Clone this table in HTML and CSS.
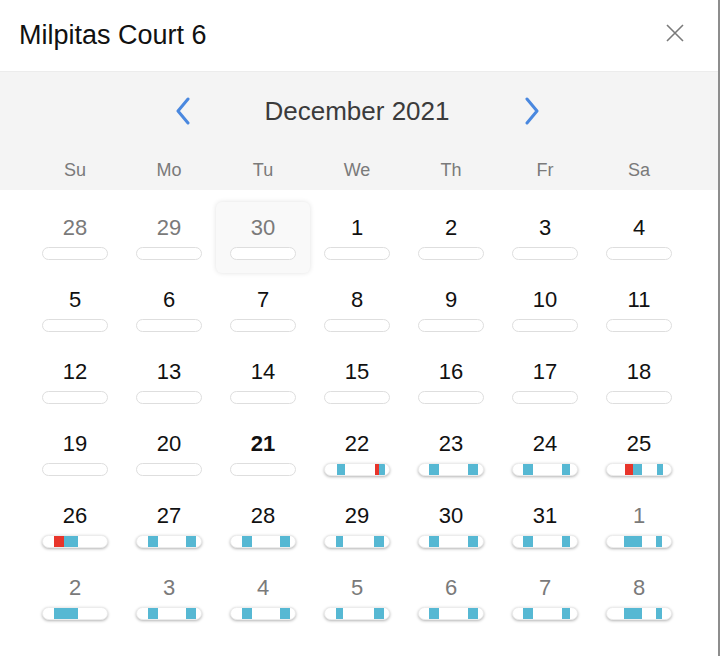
FILE: index.html
```html
<!DOCTYPE html>
<html>
<head>
<meta charset="utf-8">
<link rel="stylesheet" href="styles.css">
</head>
<body>
<div class="modal">
  <header class="head">
    <h1 class="title">Milpitas Court 6</h1>
    <button class="close" aria-label="Close">
      <svg width="20" height="20" viewBox="0 0 20 20"><path d="M2 2L18 18M18 2L2 18" stroke="#7a7a7a" stroke-width="1.6" fill="none"/></svg>
    </button>
  </header>
  <section class="band">
    <div class="nav">
      <svg class="chev" width="16" height="28" viewBox="0 0 16 28"><path d="M13 2L3 14L13 26" stroke="#4a88df" stroke-width="3" fill="none" stroke-linecap="round" stroke-linejoin="round"/></svg>
      <div class="month">December 2021</div>
      <svg class="chev" width="16" height="28" viewBox="0 0 16 28"><path d="M3 2L13 14L3 26" stroke="#4a88df" stroke-width="3" fill="none" stroke-linecap="round" stroke-linejoin="round"/></svg>
    </div>
    <div class="weekdays">
      <div>Su</div><div>Mo</div><div>Tu</div><div>We</div><div>Th</div><div>Fr</div><div>Sa</div>
    </div>
  </section>
  <section class="grid">
    <div class="cell other"><span class="num">28</span><span class="bar"></span></div>
    <div class="cell other"><span class="num">29</span><span class="bar"></span></div>
    <div class="cell other hover"><span class="num">30</span><span class="bar"></span></div>
    <div class="cell"><span class="num">1</span><span class="bar"></span></div>
    <div class="cell"><span class="num">2</span><span class="bar"></span></div>
    <div class="cell"><span class="num">3</span><span class="bar"></span></div>
    <div class="cell"><span class="num">4</span><span class="bar"></span></div>

    <div class="cell"><span class="num">5</span><span class="bar"></span></div>
    <div class="cell"><span class="num">6</span><span class="bar"></span></div>
    <div class="cell"><span class="num">7</span><span class="bar"></span></div>
    <div class="cell"><span class="num">8</span><span class="bar"></span></div>
    <div class="cell"><span class="num">9</span><span class="bar"></span></div>
    <div class="cell"><span class="num">10</span><span class="bar"></span></div>
    <div class="cell"><span class="num">11</span><span class="bar"></span></div>

    <div class="cell"><span class="num">12</span><span class="bar"></span></div>
    <div class="cell"><span class="num">13</span><span class="bar"></span></div>
    <div class="cell"><span class="num">14</span><span class="bar"></span></div>
    <div class="cell"><span class="num">15</span><span class="bar"></span></div>
    <div class="cell"><span class="num">16</span><span class="bar"></span></div>
    <div class="cell"><span class="num">17</span><span class="bar"></span></div>
    <div class="cell"><span class="num">18</span><span class="bar"></span></div>

    <div class="cell"><span class="num">19</span><span class="bar"></span></div>
    <div class="cell"><span class="num">20</span><span class="bar"></span></div>
    <div class="cell today"><span class="num">21</span><span class="bar"></span></div>
    <div class="cell"><span class="num">22</span><span class="bar full"><i class="seg c" style="left:12px;width:8px"></i><i class="seg r" style="left:50px;width:4px"></i><i class="seg c" style="left:54px;width:6px"></i></span></div>
    <div class="cell"><span class="num">23</span><span class="bar full"><i class="seg c" style="left:10px;width:10px"></i><i class="seg c" style="left:49px;width:10px"></i></span></div>
    <div class="cell"><span class="num">24</span><span class="bar full"><i class="seg c" style="left:10px;width:10px"></i><i class="seg c" style="left:49px;width:8px"></i></span></div>
    <div class="cell"><span class="num">25</span><span class="bar full"><i class="seg r" style="left:18px;width:8px"></i><i class="seg c" style="left:26px;width:9px"></i><i class="seg c" style="left:50px;width:6px"></i></span></div>

    <div class="cell"><span class="num">26</span><span class="bar full"><i class="seg r" style="left:11px;width:10px"></i><i class="seg c" style="left:21px;width:14px"></i></span></div>
    <div class="cell"><span class="num">27</span><span class="bar full"><i class="seg c" style="left:11px;width:10px"></i><i class="seg c" style="left:49px;width:10px"></i></span></div>
    <div class="cell"><span class="num">28</span><span class="bar full"><i class="seg c" style="left:11px;width:10px"></i><i class="seg c" style="left:49px;width:10px"></i></span></div>
    <div class="cell"><span class="num">29</span><span class="bar full"><i class="seg c" style="left:11px;width:7px"></i><i class="seg c" style="left:49px;width:10px"></i></span></div>
    <div class="cell"><span class="num">30</span><span class="bar full"><i class="seg c" style="left:10px;width:10px"></i><i class="seg c" style="left:49px;width:10px"></i></span></div>
    <div class="cell"><span class="num">31</span><span class="bar full"><i class="seg c" style="left:10px;width:10px"></i><i class="seg c" style="left:49px;width:8px"></i></span></div>
    <div class="cell other"><span class="num">1</span><span class="bar full"><i class="seg c" style="left:17px;width:18px"></i><i class="seg c" style="left:49px;width:6px"></i></span></div>

    <div class="cell other"><span class="num">2</span><span class="bar full"><i class="seg c" style="left:11px;width:24px"></i></span></div>
    <div class="cell other"><span class="num">3</span><span class="bar full"><i class="seg c" style="left:11px;width:10px"></i><i class="seg c" style="left:49px;width:10px"></i></span></div>
    <div class="cell other"><span class="num">4</span><span class="bar full"><i class="seg c" style="left:11px;width:10px"></i><i class="seg c" style="left:49px;width:10px"></i></span></div>
    <div class="cell other"><span class="num">5</span><span class="bar full"><i class="seg c" style="left:11px;width:7px"></i><i class="seg c" style="left:49px;width:10px"></i></span></div>
    <div class="cell other"><span class="num">6</span><span class="bar full"><i class="seg c" style="left:10px;width:10px"></i><i class="seg c" style="left:49px;width:10px"></i></span></div>
    <div class="cell other"><span class="num">7</span><span class="bar full"><i class="seg c" style="left:10px;width:10px"></i><i class="seg c" style="left:49px;width:8px"></i></span></div>
    <div class="cell other"><span class="num">8</span><span class="bar full"><i class="seg c" style="left:17px;width:18px"></i><i class="seg c" style="left:49px;width:6px"></i></span></div>
  </section>
</div>
</body>
</html>
```
FILE: styles.css
```css
* { box-sizing: border-box; }
html, body { margin: 0; padding: 0; background: #fff; }
body {
  font-family: "Liberation Sans", Arial, Helvetica, sans-serif;
  color: #111;
}
.modal {
  width: 720px;
  height: 656px;
  border-right: 2px solid #8d8d8d;
  background: #fff;
}
.head {
  height: 72px;
  display: flex;
  align-items: center;
  justify-content: space-between;
  padding: 0 33px 0 19px;
  border-bottom: 1px solid #ececec;
}
.title {
  margin: 0;
  font-size: 27px;
  font-weight: 400;
  color: #111;
  padding-bottom: 0;
}
.close {
  border: 0;
  background: none;
  padding: 0;
  width: 20px;
  height: 20px;
  display: flex;
  margin-bottom: 6px;
}
.band {
  background: #f4f4f4;
  height: 118px;
  padding-left: 28px;
}
.nav {
  width: 658px;
  height: 78px;
  display: flex;
  align-items: center;
  justify-content: center;
  gap: 74px;
}
.month {
  font-size: 26px;
  color: #3b3b3b;
  padding-top: 1px;
}
.chev { display: block; }
.weekdays {
  width: 658px;
  height: 40px;
  display: grid;
  grid-template-columns: repeat(7, 94px);
  align-items: center;
  justify-items: center;
  font-size: 18px;
  color: #7a7a7a;
}
.grid {
  padding: 12px 0 0 28px;
  display: grid;
  grid-template-columns: repeat(7, 94px);
  grid-auto-rows: 72px;
}
.cell {
  display: flex;
  flex-direction: column;
  align-items: center;
  padding-top: 13px;
  border-radius: 6px;
  height: 71px;
}
.num {
  font-size: 22px;
  line-height: 26px;
  color: #111;
}
.other .num { color: #7a7a7a; }
.today .num { font-weight: 700; }
.hover {
  background: #f9f9f9;
  box-shadow: 0 0 5px rgba(0,0,0,0.12);
}
.bar {
  margin-top: 6px;
  width: 66px;
  height: 13px;
  border-radius: 7px;
  border: 1.5px solid #dedede;
  background: #fff;
  position: relative;
  overflow: hidden;
}
.bar.full {
  border: 1px solid #ececec;
  box-shadow: 0 1px 3px rgba(0,0,0,0.3);
}
.seg {
  position: absolute;
  top: 0;
  bottom: 0;
}
.seg.c { background: #56b8d3; }
.seg.r { background: #e8352b; }
```
